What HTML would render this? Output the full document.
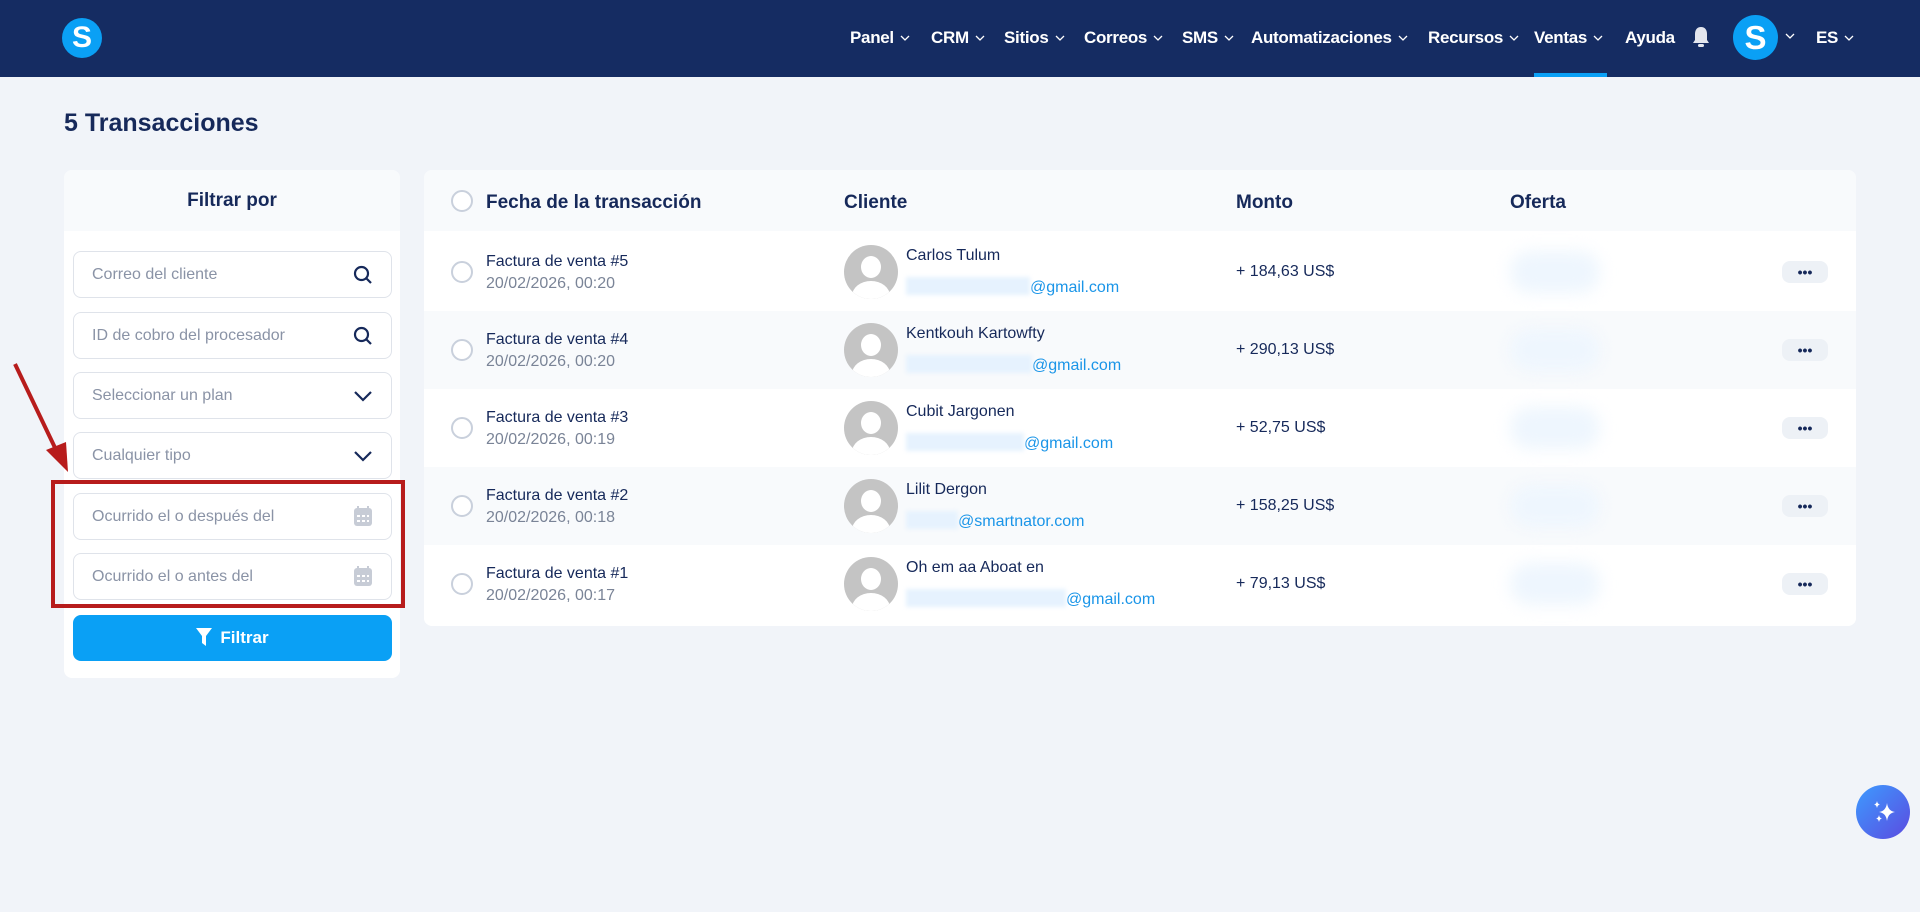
<!DOCTYPE html>
<html><head><meta charset="utf-8"><style>
*{box-sizing:border-box;margin:0;padding:0}
body{width:1920px;height:912px;background:#f1f4f9;font-family:"Liberation Sans",sans-serif;position:relative;overflow:hidden;color:#16295a}
.nav{position:absolute;left:0;top:0;width:1920px;height:77px;background:#152c62}
.logo{position:absolute;left:62px;top:18px;width:40px;height:40px;border-radius:50%;background:#0aa0f5;color:#fff;font-weight:bold;font-size:30px;text-align:center;line-height:40px}
.ni{position:absolute;top:28px;color:#fff;font-weight:bold;font-size:17px;white-space:nowrap;letter-spacing:-0.3px}
.ni svg{margin-left:6px;vertical-align:2px}
.ul{position:absolute;left:1534px;top:73px;width:73px;height:4px;background:#0aa0f5}
h1{position:absolute;left:64px;top:109px;font-size:25px;font-weight:bold;color:#16295a}
.panel{position:absolute;background:#fff;border-radius:8px;overflow:hidden}
.ph{background:#f8fafc;height:61px}
.inp{position:absolute;left:9px;width:319px;height:47px;border:1px solid #dfe3ea;border-radius:8px;background:#fff;color:#8a93a6;font-size:16px;padding-left:18px;line-height:45px}
.inp svg{position:absolute;right:18px;top:13px}
.btn{position:absolute;left:9px;top:445px;width:319px;height:46px;border-radius:8px;background:#0aa0f5;color:#fff;font-weight:bold;font-size:17px;text-align:center;line-height:46px}
.th{position:absolute;top:22px;font-weight:bold;font-size:19px}
.row{position:absolute;left:0;width:1432px;height:78px}
.cb{position:absolute;left:27px;width:22px;height:22px;border:2px solid #c9d0dc;border-radius:50%;background:#fff}
.t1{position:absolute;font-size:16px;color:#16295a}
.t2{position:absolute;font-size:16px;color:#7a8497}
.av{position:absolute;left:420px;top:12px;width:54px;height:54px;border-radius:50%;background:#c4c4c4;overflow:hidden}
.av:before{content:"";position:absolute;left:17px;top:11px;width:20px;height:22px;border-radius:50%;background:#fff}
.av:after{content:"";position:absolute;left:8px;top:36px;width:38px;height:30px;border-radius:50%;background:#fff}
.em{position:absolute;font-size:16px;color:#1a95e8}
.blur{display:inline-block;height:18px;background:#e6f2fe;filter:blur(2px);vertical-align:-3px}
.of{position:absolute;left:1086px;top:18px;width:90px;height:42px;background:#eef6fe;border-radius:20px;filter:blur(8px)}
.dots{position:absolute;left:1358px;top:28px;width:46px;height:22px;border-radius:8px;background:#edf1f6;text-align:center;line-height:22px;font-size:14px;font-weight:bold;letter-spacing:0px;color:#16295a}
</style></head><body>
<div class="nav">
<div class="logo">S</div>
<div class="ni" style="left:850px">Panel<svg width="10" height="6"><path d="M1 1l4 4 4-4" stroke="#fff" fill="none" stroke-width="1.3"/></svg></div>
<div class="ni" style="left:931px">CRM<svg width="10" height="6"><path d="M1 1l4 4 4-4" stroke="#fff" fill="none" stroke-width="1.3"/></svg></div>
<div class="ni" style="left:1004px">Sitios<svg width="10" height="6"><path d="M1 1l4 4 4-4" stroke="#fff" fill="none" stroke-width="1.3"/></svg></div>
<div class="ni" style="left:1084px">Correos<svg width="10" height="6"><path d="M1 1l4 4 4-4" stroke="#fff" fill="none" stroke-width="1.3"/></svg></div>
<div class="ni" style="left:1182px">SMS<svg width="10" height="6"><path d="M1 1l4 4 4-4" stroke="#fff" fill="none" stroke-width="1.3"/></svg></div>
<div class="ni" style="left:1251px">Automatizaciones<svg width="10" height="6"><path d="M1 1l4 4 4-4" stroke="#fff" fill="none" stroke-width="1.3"/></svg></div>
<div class="ni" style="left:1428px">Recursos<svg width="10" height="6"><path d="M1 1l4 4 4-4" stroke="#fff" fill="none" stroke-width="1.3"/></svg></div>
<div class="ni" style="left:1534px">Ventas<svg width="10" height="6"><path d="M1 1l4 4 4-4" stroke="#fff" fill="none" stroke-width="1.3"/></svg></div>
<div class="ni" style="left:1625px">Ayuda</div>
<svg style="position:absolute;left:1691px;top:26px" width="20" height="22"><path d="M10 1c-4 0-6 3-6 7v6l-2 3h16l-2-3V8c0-4-2-7-6-7z" fill="#e3e6ee"/><rect x="7" y="18" width="6" height="3" rx="1.5" fill="#e3e6ee"/></svg>
<div class="logo" style="left:1733px;top:15px;width:45px;height:45px;line-height:45px;font-size:33px">S</div>
<svg style="position:absolute;left:1785px;top:33px" width="10" height="6"><path d="M1 1l4 4 4-4" stroke="#fff" fill="none" stroke-width="1.3"/></svg>
<div class="ni" style="left:1816px">ES<svg width="10" height="6"><path d="M1 1l4 4 4-4" stroke="#fff" fill="none" stroke-width="1.3"/></svg></div>
<div class="ul"></div>
</div>
<h1>5 Transacciones</h1>

<div class="panel" style="left:64px;top:170px;width:336px;height:508px">
<div class="ph"><div style="text-align:center;font-weight:bold;font-size:19px;line-height:61px">Filtrar por</div></div>
<div class="inp" style="top:81px">Correo del cliente<svg width="20" height="20"><circle cx="8.5" cy="8.5" r="6.5" stroke="#16295a" stroke-width="2.2" fill="none"/><path d="M13 13l5 5" stroke="#16295a" stroke-width="2.2"/></svg></div>
<div class="inp" style="top:142px">ID de cobro del procesador<svg width="20" height="20"><circle cx="8.5" cy="8.5" r="6.5" stroke="#16295a" stroke-width="2.2" fill="none"/><path d="M13 13l5 5" stroke="#16295a" stroke-width="2.2"/></svg></div>
<div class="inp" style="top:202px">Seleccionar un plan<svg width="20" height="20" style="top:14px"><path d="M2 5l8 8 8-8" stroke="#16295a" stroke-width="2.2" fill="none"/></svg></div>
<div class="inp" style="top:262px">Cualquier tipo<svg width="20" height="20" style="top:14px"><path d="M2 5l8 8 8-8" stroke="#16295a" stroke-width="2.2" fill="none"/></svg></div>
<div class="inp" style="top:323px">Ocurrido el o después del<svg width="20" height="22" style="top:11px"><rect x="1" y="3" width="18" height="18" rx="3" fill="#c7ccd6"/><rect x="4" y="1" width="2" height="4" fill="#c7ccd6"/><rect x="14" y="1" width="2" height="4" fill="#c7ccd6"/><g fill="#fff"><rect x="4" y="10" width="3" height="2"/><rect x="9" y="10" width="3" height="2"/><rect x="14" y="10" width="2" height="2"/><rect x="4" y="15" width="3" height="2"/><rect x="9" y="15" width="3" height="2"/><rect x="14" y="15" width="2" height="2"/></g></svg></div>
<div class="inp" style="top:383px">Ocurrido el o antes del<svg width="20" height="22" style="top:11px"><rect x="1" y="3" width="18" height="18" rx="3" fill="#c7ccd6"/><rect x="4" y="1" width="2" height="4" fill="#c7ccd6"/><rect x="14" y="1" width="2" height="4" fill="#c7ccd6"/><g fill="#fff"><rect x="4" y="10" width="3" height="2"/><rect x="9" y="10" width="3" height="2"/><rect x="14" y="10" width="2" height="2"/><rect x="4" y="15" width="3" height="2"/><rect x="9" y="15" width="3" height="2"/><rect x="14" y="15" width="2" height="2"/></g></svg></div>
<div class="btn"><svg width="16" height="18" style="vertical-align:-3px;margin-right:8px"><path d="M0 0h16l-6 8v10l-4-3V8z" fill="#fff"/></svg>Filtrar</div>
</div>
<div style="position:absolute;left:51px;top:480px;width:354px;height:128px;border:4px solid #b71c1c"></div>
<svg style="position:absolute;left:0;top:350px" width="80" height="130"><path d="M15 14L58 104" stroke="#b71c1c" stroke-width="4"/><path d="M68 122L46 100l20-8z" fill="#b71c1c"/></svg>

<div class="panel" style="left:424px;top:170px;width:1432px;height:456px">
<div class="ph" style="position:relative">
<div class="cb" style="top:20px"></div>
<div class="th" style="left:62px">Fecha de la transacción</div>
<div class="th" style="left:420px">Cliente</div>
<div class="th" style="left:812px">Monto</div>
<div class="th" style="left:1086px">Oferta</div>
</div>
<div class="row" style="top:63px;background:#fff">
<div class="cb" style="top:28px"></div><div class="t1" style="left:62px;top:20px">Factura de venta #5</div><div class="t2" style="left:62px;top:42px">20/02/2026, 00:20</div>
<div class="av"></div><div class="t1" style="left:482px;top:14px">Carlos Tulum</div><div class="em" style="left:482px;top:44px"><span class="blur" style="width:124px"></span>@gmail.com</div>
<div class="t1" style="left:812px;top:30px">+ 184,63 US$</div><div class="of"></div><div class="dots">•••</div></div>
<div class="row" style="top:141px;background:#f8fafc">
<div class="cb" style="top:28px"></div><div class="t1" style="left:62px;top:20px">Factura de venta #4</div><div class="t2" style="left:62px;top:42px">20/02/2026, 00:20</div>
<div class="av"></div><div class="t1" style="left:482px;top:14px">Kentkouh Kartowfty</div><div class="em" style="left:482px;top:44px"><span class="blur" style="width:126px"></span>@gmail.com</div>
<div class="t1" style="left:812px;top:30px">+ 290,13 US$</div><div class="of"></div><div class="dots">•••</div></div>
<div class="row" style="top:219px;background:#fff">
<div class="cb" style="top:28px"></div><div class="t1" style="left:62px;top:20px">Factura de venta #3</div><div class="t2" style="left:62px;top:42px">20/02/2026, 00:19</div>
<div class="av"></div><div class="t1" style="left:482px;top:14px">Cubit Jargonen</div><div class="em" style="left:482px;top:44px"><span class="blur" style="width:118px"></span>@gmail.com</div>
<div class="t1" style="left:812px;top:30px">+ 52,75 US$</div><div class="of"></div><div class="dots">•••</div></div>
<div class="row" style="top:297px;background:#f8fafc">
<div class="cb" style="top:28px"></div><div class="t1" style="left:62px;top:20px">Factura de venta #2</div><div class="t2" style="left:62px;top:42px">20/02/2026, 00:18</div>
<div class="av"></div><div class="t1" style="left:482px;top:14px">Lilit Dergon</div><div class="em" style="left:482px;top:44px"><span class="blur" style="width:52px"></span>@smartnator.com</div>
<div class="t1" style="left:812px;top:30px">+ 158,25 US$</div><div class="of"></div><div class="dots">•••</div></div>
<div class="row" style="top:375px;background:#fff">
<div class="cb" style="top:28px"></div><div class="t1" style="left:62px;top:20px">Factura de venta #1</div><div class="t2" style="left:62px;top:42px">20/02/2026, 00:17</div>
<div class="av"></div><div class="t1" style="left:482px;top:14px">Oh em aa Aboat en</div><div class="em" style="left:482px;top:44px"><span class="blur" style="width:160px"></span>@gmail.com</div>
<div class="t1" style="left:812px;top:30px">+ 79,13 US$</div><div class="of"></div><div class="dots">•••</div></div>
</div>

<div style="position:absolute;left:1856px;top:785px;width:54px;height:54px;border-radius:50%;background:linear-gradient(135deg,#3d9bff,#5b4be0)">
<svg width="54" height="54"><path d="M31 18q1 8 8 9q-7 1-8 9q-1-8-8-9q7-1 8-9z" fill="#fff"/><path d="M21 16q0.5 3 3 3.5q-2.5 0.5-3 3.5q-0.5-3-3-3.5q2.5-0.5 3-3.5z" fill="#fff"/><path d="M23 30q0.5 3 3 3.5q-2.5 0.5-3 3.5q-0.5-3-3-3.5q2.5-0.5 3-3.5z" fill="#fff"/></svg>
</div>
</body></html>
